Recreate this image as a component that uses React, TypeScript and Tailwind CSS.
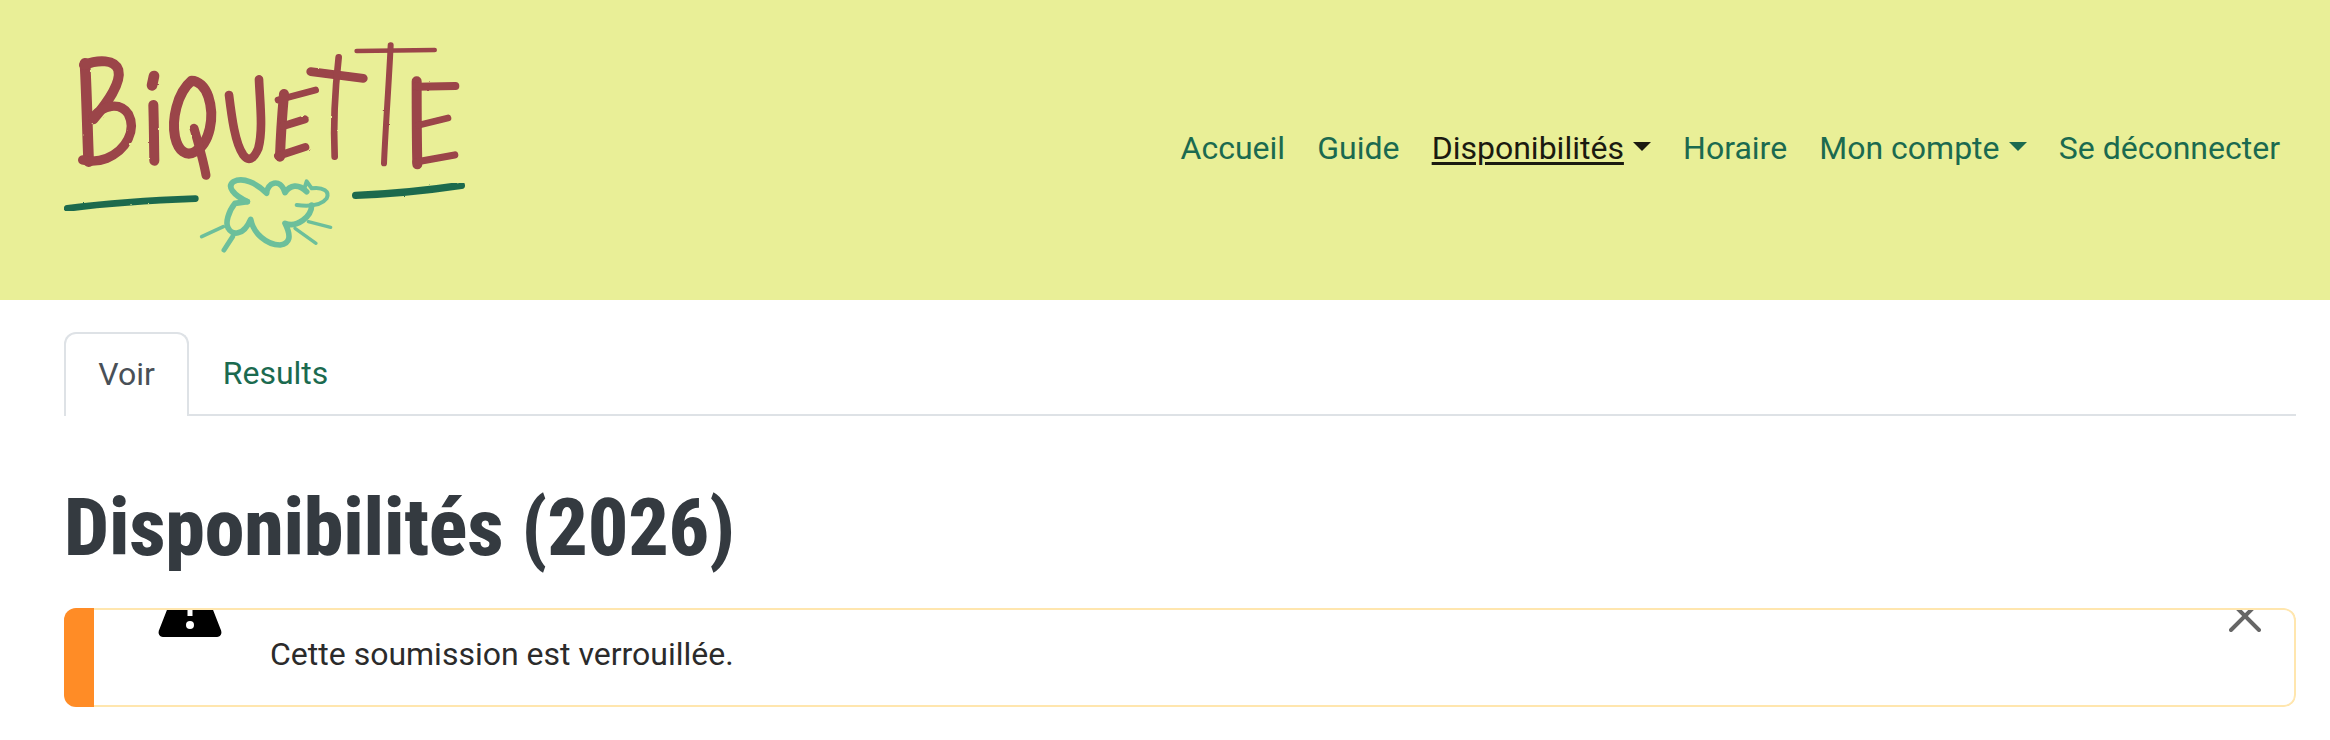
function Logo() {
  return (
    <svg viewBox="0 0 1380 750" className="h-[250px] w-[460px] shrink-0" fill="none" strokeLinecap="round" strokeLinejoin="round">
      <filter id="rough">
        <feTurbulence type="fractalNoise" baseFrequency="0.05" numOctaves="2" seed="4" />
        <feDisplacementMap in="SourceGraphic" scale="5" />
      </filter>
      <g stroke="#9b4449" filter="url(#rough)">
        {/* B */}
        <path d="M135 130C140 220 142 330 146 425" strokeWidth="32" />
        <path d="M132 135C175 118 225 118 235 150C245 190 200 250 160 298" strokeWidth="30" />
        <path d="M160 290C190 255 240 245 265 282C290 330 260 390 200 415C175 425 150 425 128 420" strokeWidth="28" />
        {/* i */}
        <path d="M342 168L336 196" strokeWidth="32" />
        <path d="M340 255C342 320 342 370 343 422" strokeWidth="30" />
        {/* Q */}
        <path d="M455 182C410 220 395 300 405 350C415 395 440 410 465 395C510 370 525 290 505 230C495 200 475 182 455 182Z" strokeWidth="30" />
        <path d="M462 325C475 370 490 420 498 466" strokeWidth="27" />
        {/* U */}
        <path d="M567 225C575 290 585 370 610 405C625 425 640 420 655 385C670 330 660 250 657 178" strokeWidth="26" />
        {/* E */}
        <path d="M827 210L714 240" strokeWidth="20" />
        <path d="M732 222C726 290 722 350 720 410" strokeWidth="30" />
        <path d="M730 318L794 298" strokeWidth="24" />
        <path d="M714 408L796 381" strokeWidth="24" />
        {/* T */}
        <path d="M812 155L970 175" strokeWidth="26" />
        <path d="M896 112C886 200 880 320 884 410" strokeWidth="20" />
        {/* T */}
        <path d="M950 93L1184 90" strokeWidth="14" />
        <path d="M1052 76C1046 200 1036 330 1032 430" strokeWidth="18" />
        {/* E */}
        <path d="M1130 184C1130 260 1130 350 1132 433" strokeWidth="30" />
        <path d="M1128 200L1246 198" strokeWidth="24" />
        <path d="M1135 316L1224 294" strokeWidth="20" />
        <path d="M1128 426L1244 405" strokeWidth="22" />
      </g>
      <g stroke="#1d6b4e" filter="url(#rough)">
        <path d="M82 565C200 550 350 540 466 536" strokeWidth="20" />
        <path d="M947 526C1050 522 1170 510 1264 496" strokeWidth="22" />
      </g>
      <g stroke="#6cbf9b">
        <path d="M622 545L585 550C565 575 555 610 565 625C575 645 610 650 632 598C640 640 680 675 720 675C750 670 755 650 735 610C770 625 815 590 815 555" strokeWidth="17" />
        <path d="M622 545C580 525 560 500 580 485C610 470 650 490 680 520C680 490 720 470 735 518C750 495 775 490 800 515" strokeWidth="17" />
        <path d="M795 500L800 484L815 505C850 500 870 515 860 535C845 555 810 560 770 555" strokeWidth="12" />
        <path d="M550 620L485 650" strokeWidth="11" />
        <path d="M578 650L552 690" strokeWidth="15" />
        <path d="M805 605L872 622" strokeWidth="10" />
        <path d="M765 625L828 670" strokeWidth="10" />
      </g>
    </svg>
  );
}

function NavLink({ children, active, caret }: { children: string; active?: boolean; caret?: boolean }) {
  return (
    <a className={active ? "flex items-center gap-[9px] text-[#1b1a10]" : "flex items-center gap-[9px] text-[#1b6a4f]"}>
      <span className={active ? "underline decoration-[3px] underline-offset-[3px]" : ""}>{children}</span>
      {caret ? (
        <span className="mb-[3px] h-0 w-0 border-x-[9px] border-t-[9px] border-x-transparent border-t-current" />
      ) : null}
    </a>
  );
}

export default function App() {
  return (
    <div className="min-h-[740px] overflow-hidden bg-white font-['Roboto',sans-serif] text-[32px]">
      <header className="flex h-[300px] items-start justify-between bg-[#e9ef97] pl-10 pr-[50px] pt-5">
        <Logo />
        <nav className="mt-[104px] flex h-12 items-center gap-[32.2px] leading-[48px]">
          <NavLink>Accueil</NavLink>
          <NavLink>Guide</NavLink>
          <NavLink active caret>Disponibilités</NavLink>
          <NavLink>Horaire</NavLink>
          <NavLink caret>Mon compte</NavLink>
          <NavLink>Se déconnecter</NavLink>
        </nav>
      </header>

      <main className="pl-16 pr-[34px] pt-8">
        <div className="flex h-[84px] border-b-2 border-[#dee2e6]">
          <a className="-mb-[2px] flex h-[84px] w-[125px] items-center justify-center rounded-t-xl border-2 border-b-0 border-[#dee2e6] bg-white pb-[2px] text-[#495057]">
            Voir
          </a>
          <a className="flex w-[173px] items-center justify-center text-[#1b6a4f]">Results</a>
        </div>

        <h1 className="mt-16 text-[80px] font-extrabold leading-[96px] tracking-[-0.2px] text-[#343a40] font-stretch-condensed">
          Disponibilités (2026)
        </h1>

        <div className="mt-8 flex h-[99px] overflow-hidden rounded-xl">
          <div className="w-[30px] shrink-0 bg-[#ff8c26]" />
          <div className="flex flex-1 overflow-hidden rounded-r-xl border-2 border-l-0 border-[#ffe6ae]">
            <svg viewBox="0 0 64 86" className="-mt-[59px] ml-[64px] h-[86px] w-[64px] shrink-0">
              <path d="M32 0L62.500 78C65 83 62 86 58 86H6C2 86 -1 83 1.500 78Z" fill="#000" />
              <path d="M29.500 48H34.500L34.500 65H29.500Z" fill="#fff" />
              <circle cx="32" cy="74" r="4" fill="#fff" />
            </svg>
            <p className="ml-12 pt-5 leading-[48px] text-[#2b2b2b]">Cette soumission est verrouillée.</p>
            <svg viewBox="0 0 32 32" className="-mt-[10px] ml-auto mr-[33px] h-8 w-8 shrink-0" fill="none" stroke="#666" strokeWidth="4" strokeLinecap="round">
              <path d="M2 2L30 30M30 2L2 30" />
            </svg>
          </div>
        </div>
      </main>
    </div>
  );
}
